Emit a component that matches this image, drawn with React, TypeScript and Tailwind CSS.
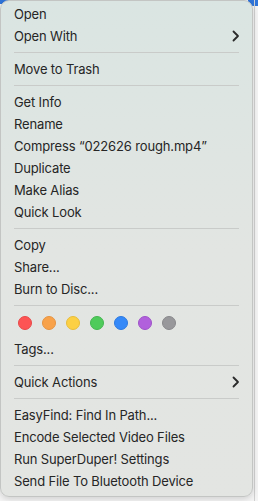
import React from "react";

const Chevron = () => (
  <svg width="8" height="12" viewBox="0 0 8 12" className="mr-[12px]">
    <polyline points="1.5,1.5 6,6 1.5,10.5" fill="none" stroke="#2a2a2a" strokeWidth="1.8" strokeLinecap="round" strokeLinejoin="round" />
  </svg>
);

const Item = ({ label, sub }: { label: string; sub?: boolean }) => (
  <div className="h-[22px] flex items-center justify-between pl-[13px] text-[13px] tracking-[-0.15px] text-[#262626] leading-none">
    <span>{label}</span>
    {sub && <Chevron />}
  </div>
);

const Sep = () => (
  <div className="h-[11px] flex items-center px-[13px]">
    <div className="h-px w-full bg-[#c9cbc9]" />
  </div>
);

const dots = [
  { bg: "bg-[#fd5454]", br: "border-[#e84848]" },
  { bg: "bg-[#f8a24a]", br: "border-[#e69340]" },
  { bg: "bg-[#fcd044]", br: "border-[#e8bd3a]" },
  { bg: "bg-[#4fcb5b]", br: "border-[#43b64f]" },
  { bg: "bg-[#3589f8]", br: "border-[#2c79e0]" },
  { bg: "bg-[#b160dc]", br: "border-[#9e52c8]" },
  { bg: "bg-[#98989b]", br: "border-[#88888b]" },
];

export default function App() {
  return (
    <div
      className="w-[258px] h-[501px] bg-[#f4f4f4] flex overflow-hidden relative"
      style={{ fontFamily: "Inter, 'Liberation Sans', sans-serif" }}
    >
      <div className="absolute top-0 left-0 w-[12px] h-[4px] bg-[#2f74d9]" />
      <div className="absolute top-0 right-0 w-[10px] h-[6px] bg-[#2f74d9]" />
      <div className="absolute top-0 right-[3px] w-px h-full bg-[#d0d0d0]" />
      <div className="relative w-[253px] h-[497px] shrink-0 rounded-[9px] border border-[#c3c5c3] bg-gradient-to-b from-[#dae5e2] via-[#e2e5e2] to-[#e3e5e2] shadow-[0_2px_6px_rgba(0,0,0,0.15)] pt-[2px] pb-[4px] flex flex-col">
        <Item label="Open" />
        <Item label="Open With" sub />
        <Sep />
        <Item label="Move to Trash" />
        <Sep />
        <Item label="Get Info" />
        <Item label="Rename" />
        <Item label="Compress “022626 rough.mp4”" />
        <Item label="Duplicate" />
        <Item label="Make Alias" />
        <Item label="Quick Look" />
        <Sep />
        <Item label="Copy" />
        <Item label="Share..." />
        <Item label="Burn to Disc..." />
        <Sep />
        <div className="h-[27px] flex items-start pt-[5px] pl-[17px] gap-[10px]">
          {dots.map((d, i) => (
            <div key={i} className={`w-[14px] h-[14px] rounded-full border ${d.bg} ${d.br}`} />
          ))}
        </div>
        <Item label="Tags..." />
        <Sep />
        <Item label="Quick Actions" sub />
        <Sep />
        <Item label="EasyFind: Find In Path..." />
        <Item label="Encode Selected Video Files" />
        <Item label="Run SuperDuper! Settings" />
        <Item label="Send File To Bluetooth Device" />
      </div>
    </div>
  );
}
